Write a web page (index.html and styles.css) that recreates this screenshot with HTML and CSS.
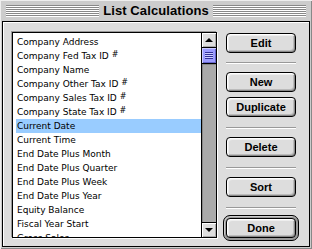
FILE: index.html
```html
<!DOCTYPE html>
<html>
<head>
<meta charset="utf-8">
<link rel="stylesheet" href="styles.css">
</head>
<body>
<div class="window">
  <div class="titlebar">
    <span class="stripes"></span>
    <span class="title">List Calculations</span>
    <span class="stripes"></span>
  </div>
  <div class="content">
    <div class="listframe">
      <ul class="list">
        <li class="row">Company Address</li>
        <li class="row">Company Fed Tax ID <span class="hash">#</span></li>
        <li class="row">Company Name</li>
        <li class="row">Company Other Tax ID <span class="hash">#</span></li>
        <li class="row">Company Sales Tax ID <span class="hash">#</span></li>
        <li class="row">Company State Tax ID <span class="hash">#</span></li>
        <li class="row selected">Current Date</li>
        <li class="row">Current Time</li>
        <li class="row">End Date Plus Month</li>
        <li class="row">End Date Plus Quarter</li>
        <li class="row">End Date Plus Week</li>
        <li class="row">End Date Plus Year</li>
        <li class="row">Equity Balance</li>
        <li class="row">Fiscal Year Start</li>
        <li class="row">Gross Sales</li>
      </ul>
      <div class="scrollbar">
        <div class="arrow up"><span class="tri-up"></span></div>
        <div class="thumb"><span class="grip"></span></div>
        <div class="track"></div>
        <div class="arrow down"><span class="tri-down"></span></div>
      </div>
    </div>
    <div class="buttons">
      <div class="btn first">Edit</div>
      <div class="sep s1"></div>
      <div class="btn b-new">New</div>
      <div class="btn b-dup">Duplicate</div>
      <div class="sep s2"></div>
      <div class="btn b-after">Delete</div>
      <div class="sep s2"></div>
      <div class="btn b-after">Sort</div>
      <div class="sep s2"></div>
      <div class="ring"><div class="btn">Done</div></div>
    </div>
  </div>
</div>
</body>
</html>
```

FILE: styles.css
```css
html, body {
  margin: 0;
  padding: 0;
}
body {
  width: 312px;
  height: 249px;
  overflow: hidden;
  background: #cccccc;
}
.window {
  width: 312px;
  height: 249px;
  box-sizing: border-box;
  background: #cccccc;
  box-shadow: inset 1px 1px 0 #eeeeee, inset -1px -1px 0 #888888;
  display: flex;
  flex-direction: column;
}
.titlebar {
  height: 21px;
  display: flex;
  align-items: center;
  padding: 0 6px;
  flex: none;
}
.stripes {
  flex: 1;
  height: 12px;
  margin-top: 1px;
  background: repeating-linear-gradient(to bottom, #888888 0 1px, #ffffff 1px 2px);
}
.title {
  font-family: "Liberation Sans", Arial, sans-serif;
  font-weight: bold;
  font-size: 13px;
  letter-spacing: 0.1px;
  color: #000;
  padding: 0 4px;
  line-height: 21px;
}
.content {
  margin: 0 2px 2px 2px;
  height: 226px;
  box-sizing: border-box;
  border: 1px solid #000;
  background: #dddddd;
  box-shadow: inset 1px 1px 0 #ffffff;
  display: flex;
  align-items: flex-start;
  padding: 10px 0 0 9px;
}
.listframe {
  width: 205px;
  height: 206px;
  box-sizing: border-box;
  border: 1px solid #000;
  background: #fff;
  display: flex;
  box-shadow: -1px -1px 0 #999999, 1px 1px 0 #ffffff;
  flex: none;
}
.list {
  list-style: none;
  margin: 0;
  padding: 2px 0 0 3px;
  width: 188px;
  height: 204px;
  box-sizing: border-box;
  overflow: hidden;
  font-family: "DejaVu Sans", Verdana, sans-serif;
  font-size: 9px;
  color: #000;
}
.row {
  height: 14px;
  line-height: 14px;
  padding-left: 1px;
  white-space: nowrap;
}
.row.selected {
  background: #99ccff;
}
.hash {
  font-size: 8px;
  position: relative;
  top: -2px;
}
.scrollbar {
  width: 15px;
  height: 204px;
  border-left: 1px solid #000;
  box-sizing: border-box;
  display: flex;
  flex-direction: column;
}
.arrow {
  height: 15px;
  box-sizing: border-box;
  background: #dddddd;
  display: flex;
  align-items: center;
  justify-content: center;
  box-shadow: inset 1px 1px 0 #ffffff, inset -1px -1px 0 #aaaaaa;
}
.arrow.up {
  border-bottom: 1px solid #000;
}
.arrow.down {
  border-top: 1px solid #000;
}
.tri-up {
  width: 0;
  height: 0;
  border-left: 4px solid transparent;
  border-right: 4px solid transparent;
  border-bottom: 4px solid #000;
}
.tri-down {
  width: 0;
  height: 0;
  border-left: 4px solid transparent;
  border-right: 4px solid transparent;
  border-top: 4px solid #000;
}
.thumb {
  height: 16px;
  box-sizing: border-box;
  border-bottom: 1px solid #000;
  background: #9c9cff;
  box-shadow: inset 1px 1px 0 #ccccff, inset -1px -1px 0 #6666cc;
  display: flex;
  align-items: center;
  justify-content: center;
}
.grip {
  width: 8px;
  height: 7px;
  background: repeating-linear-gradient(to bottom, #333399 0 1px, #ccccff 1px 2px);
}
.track {
  flex: 1;
  background: #aaaaaa;
  box-shadow: inset 1px 1px 0 #888888;
}
.buttons {
  margin-left: 9px;
  width: 70px;
  display: flex;
  flex-direction: column;
  flex: none;
}
.btn {
  height: 20px;
  box-sizing: border-box;
  border: 1px solid #000;
  border-radius: 4px;
  background: #dddddd;
  box-shadow: inset 1px 1px 0 #ffffff, inset -1px -1px 0 #888888, inset 2px 2px 0 #eeeeee, inset -2px -2px 0 #bbbbbb;
  font-family: "Liberation Sans", Arial, sans-serif;
  font-weight: bold;
  font-size: 11px;
  line-height: 18px;
  text-align: center;
  color: #000;
}
.btn.first {
  margin-top: 1px;
}
.sep {
  height: 2px;
  box-sizing: border-box;
  border-top: 1px solid #999999;
  border-bottom: 1px solid #ffffff;
}
.s1 {
  margin-top: 9px;
}
.s2 {
  margin-top: 10px;
}
.b-new {
  margin-top: 8px;
}
.b-dup {
  margin-top: 5px;
}
.b-after {
  margin-top: 8px;
}
.ring {
  margin: 6px -3px 0 -3px;
  padding: 2px;
  border: 1px solid #000;
  border-radius: 7px;
  background: #999999;
  box-shadow: inset 1px 1px 0 #cccccc;
}
```
